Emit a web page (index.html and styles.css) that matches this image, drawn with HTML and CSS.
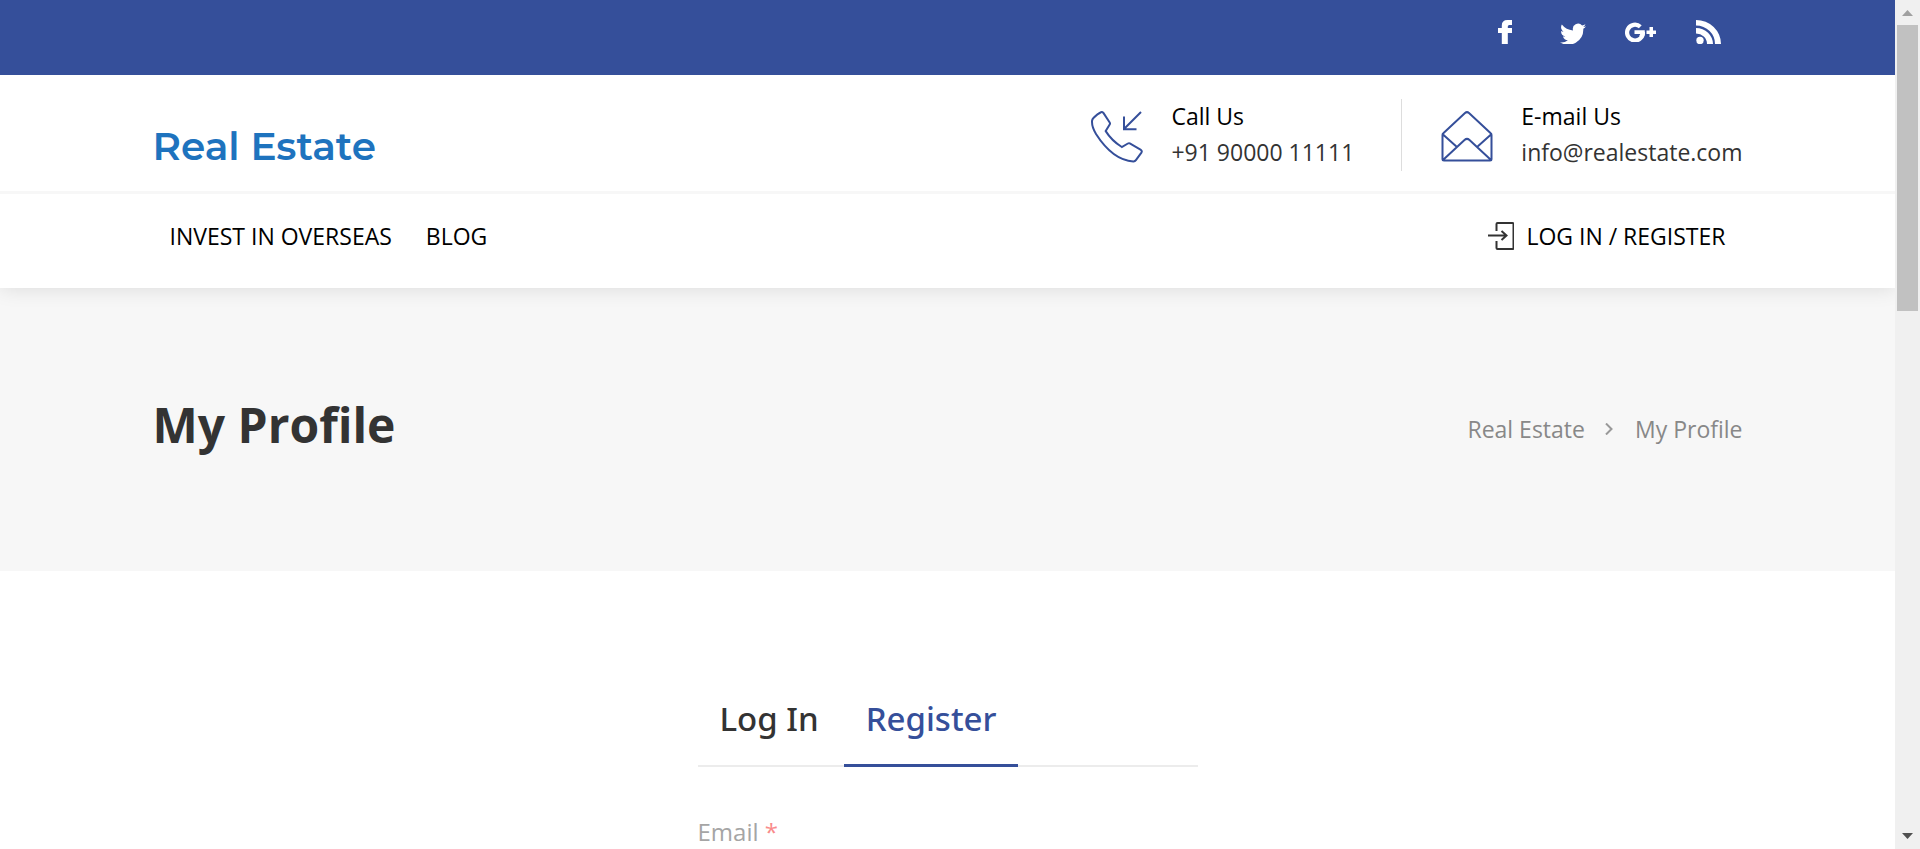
FILE: index.html
```html
<!DOCTYPE html>
<html lang="en">
<head>
<meta charset="utf-8">
<title>My Profile - Real Estate</title>
<link rel="stylesheet" href="styles.css">
</head>
<body>
<div class="page">
  <header class="site-header">
    <div class="topbar">
      <nav class="container social" aria-label="Social">
        <a href="#" aria-label="Facebook"><svg width="14" height="24" viewBox="0 0 14 24"><path d="M14 0v5h-2.700q-1.500 0-1.500 1.600V8H14v5H9.800v11H3.800V13H0V8h3.800V5.500Q3.800 0 9.500 0z"/></svg></a>
        <a href="#" aria-label="Twitter"><svg width="26" height="24" viewBox="0 -1 24 20"><path d="M24 3.600a9.800 9.800 0 0 1-2.500.8 4.900 4.900 0 0 0 2-2.600 10 10 0 0 1-3.100 1.200 4.900 4.900 0 0 0-8.400 4.500A14 14 0 0 1 1.700 2.100a4.900 4.900 0 0 0 1.500 6.600A4.900 4.900 0 0 1 1 8.100a4.900 4.900 0 0 0 3.900 4.900 5 5 0 0 1-2.200.1 4.900 4.900 0 0 0 4.600 3.400A9.900 9.900 0 0 1 0 18.500 14 14 0 0 0 21.500 6.100 10 10 0 0 0 24 3.600z"/></svg></a>
        <a href="#" aria-label="Google Plus"><svg width="31" height="20" viewBox="0 0 31 20"><path d="M15.300 4.700A7.900 7.900 0 1 0 17.900 10" fill="none" stroke="#fff" stroke-width="4.200"/><path d="M9.500 8.200h10.300q.6 4.500-1.900 8.100l-3.600-2.600 1-1.700H9.500zM24.500 5h3.500v3.500h3v3.500h-3v3h-3.500v-3h-3V8.500h3z"/></svg></a>
        <a href="#" aria-label="RSS"><svg width="25" height="24" viewBox="0 0 25 24"><circle cx="4" cy="20.500" r="3.700"/><path d="M0 0a25 24 0 0 1 25 24h-6A19 18 0 0 0 0 5.500zM0 8a17 16 0 0 1 17 16h-6A11 10.500 0 0 0 0 13.500z"/></svg></a>
      </nav>
    </div>
    <div class="brandbar">
      <div class="container brandrow">
        <a class="logo" href="#">Real Estate</a>
        <div class="contact">
          <svg width="52" height="52" viewBox="0 0 52 52"><path d="M10 1.200q1.500-.6 2.400.7l6.300 9.600q.6.900 0 1.900l-4 6.700Q20.600 29.500 30.800 36l6.100-3.500q1-.6 1.900-.1l10.700 6.200q2 1.200.9 3l-5.500 7.600q-.9 1.300-2.600 1.200Q22 49.400 5 23 .4 15.500 1.100 9.500q.2-1.400 1.300-2.500 4.300-4.500 7.600-5.800zM50 1 33.500 17.500M33 5.500v12.800h12.500"/></svg>
          <div class="contact-text"><span class="contact-label">Call Us</span><a href="tel:+919000011111">+91 90000 11111</a></div>
        </div>
        <div class="contact">
          <svg width="52" height="52" viewBox="0 0 52 52"><path d="M1.500 24v24q0 1.500 1.500 1.500h46q1.500 0 1.500-1.500V24q0-1-.8-1.700L28 2q-2-1.700-4 0L2.300 22.300q-.8.700-.8 1.700zM2 23.500l14.500 13M50 23.500l-14.500 13M2 49l21.500-20q2.500-2.200 5 0L50 49"/></svg>
          <div class="contact-text"><span class="contact-label">E-mail Us</span><a href="mailto:info@realestate.com">info@realestate.com</a></div>
        </div>
      </div>
    </div>
    <nav class="container mainnav" aria-label="Main">
      <a href="#">INVEST IN OVERSEAS</a>
      <a href="#">BLOG</a>
      <a class="login" href="#"><svg width="26" height="28" viewBox="0 0 26 28"><path d="M8.500 9V2q0-1 1-1h15q1 0 1 1v24q0 1-1 1h-15q-1 0-1-1v-7M0 13.500h18M13.500 9l5 4.500-5 4.500"/></svg>LOG IN / REGISTER</a>
    </nav>
  </header>
  <section class="titlebar">
    <div class="container titlerow">
      <h1>My Profile</h1>
      <nav class="crumbs" aria-label="Breadcrumb"><a href="#">Real Estate</a><svg width="8" height="12" viewBox="0 0 8 12"><path d="M1 .5 6.500 6 1 11.500"/></svg><span>My Profile</span></nav>
    </div>
  </section>
  <main class="account">
    <div class="tabs" role="tablist">
      <button type="button" role="tab" aria-selected="false" class="tab">Log In</button>
      <button type="button" role="tab" aria-selected="true" class="tab active">Register</button>
    </div>
    <form class="form">
      <label for="email">Email <span class="required">*</span></label>
      <input id="email" type="email" required>
    </form>
  </main>
</div>
<div class="scrollbar" aria-hidden="true">
  <svg width="11" height="6" viewBox="0 0 11 6"><path fill="#a0a0a0" d="M5.500 0 11 6H0z"/></svg>
  <div class="track"><div class="thumb"></div></div>
  <svg width="11" height="6" viewBox="0 0 11 6"><path fill="#505050" d="M0 0h11L5.500 6z"/></svg>
</div>
</body>
</html>
```
FILE: styles.css
```css
* { box-sizing: border-box; }

body {
  margin: 0;
  height: 100vh;
  overflow: hidden;
  display: flex;
  background: #fff;
  color: #333;
  font: 23px/36px "Open Sans", "Noto Sans", sans-serif;
}

a { color: inherit; text-decoration: none; }
svg { display: block; flex: none; }

.page { flex: 1; min-width: 0; overflow: hidden; }
.container { max-width: 1590px; margin: 0 auto; }

.site-header {
  position: relative;
  background: #fff;
  box-shadow: 0 0 20px rgba(0, 0, 0, 0.12);
}

.topbar { background: #354f9a; height: 75px; }
.social { display: flex; justify-content: flex-end; }
.social a { width: 68px; height: 64px; display: grid; place-items: center; }
.social svg { fill: #fff; }

.brandbar { padding: 24px 0 20px; border-bottom: 3px solid #f7f7f7; }
.brandrow { display: flex; align-items: center; }
.logo {
  margin-right: auto;
  padding-top: 22px;
  color: #1e73be;
  font: 600 39px/50px Montserrat, Inter, sans-serif;
}
.contact { display: flex; align-items: center; gap: 28px; height: 72px; }
.contact + .contact { margin-left: 47px; padding-left: 39px; border-left: 1px solid #ddd; }
.contact svg { margin-top: 4px; fill: none; stroke: #354f9a; stroke-width: 2; }
.contact-text {
  display: flex;
  flex-direction: column;
  padding-bottom: 2px;
  font-weight: 500;
}
.contact-label { color: #000; }

.mainnav {
  display: flex;
  gap: 34px;
  padding: 24px 17px 34px;
  color: #000;
  font-weight: 500;
}
.login { margin-left: auto; display: flex; align-items: center; gap: 12px; }
.login svg { fill: none; stroke: #333; stroke-width: 2; }

.titlebar { background: #f7f7f7; padding: 101px 0 110px; }
.titlerow { display: flex; justify-content: space-between; align-items: center; }
h1 { margin: 0; font-size: 48px; line-height: 72px; }
.crumbs { display: flex; align-items: center; color: #888; padding-top: 8px; }
.crumbs svg { margin: 0 22px 0 20px; fill: none; stroke: #999; stroke-width: 2; }

.account { max-width: 500px; margin: 0 auto; padding-top: 114px; }
.tabs {
  display: flex;
  gap: 3px;
  background: linear-gradient(#ececec, #ececec) bottom / 100% 2px no-repeat;
}
.tab {
  border: 0;
  border-bottom: 3px solid transparent;
  padding: 9px 22px 20px;
  background: none;
  color: #333;
  font: 500 33px/50px "Noto Sans", "Open Sans", sans-serif;
}
.tab.active { color: #354f9a; border-color: #354f9a; }

.form { padding-top: 47px; }
.form label { display: block; color: #a5a5a5; font-size: 24px; }
.required { color: #f98b8b; }
.form input { width: 100%; height: 60px; margin-top: 12px; border: 1px solid #e8e8e8; font: inherit; }

.scrollbar {
  flex: none;
  width: 25px;
  padding: 10px 2px;
  display: flex;
  flex-direction: column;
  align-items: center;
  background: #f0f0f0;
}
.track { flex: 1; align-self: stretch; padding: 9px 0; }
.thumb { height: 35.8%; background: #c1c1c1; }
```
